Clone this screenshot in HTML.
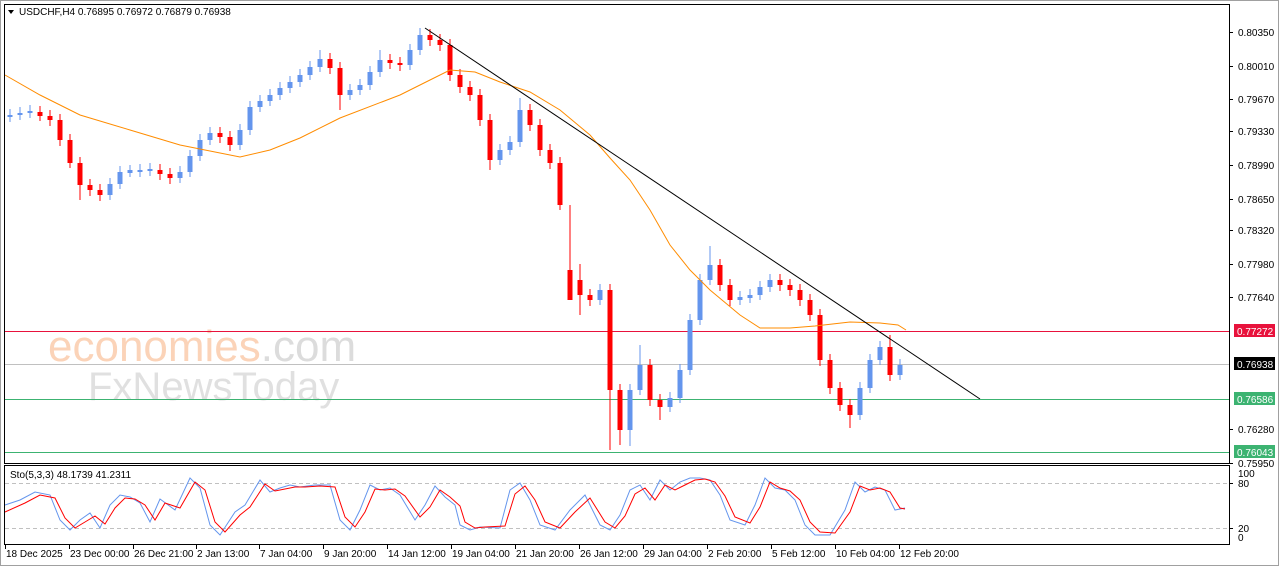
<!DOCTYPE html><html><head><meta charset="utf-8"><style>
body{margin:0;background:#fff;width:1280px;height:567px;overflow:hidden}
svg text{font-family:"Liberation Sans",sans-serif;font-size:10px}
</style></head><body>
<svg width="1280" height="567" xmlns="http://www.w3.org/2000/svg">
<rect x="0.5" y="0.5" width="1278" height="565" fill="#fff" stroke="#a0a0a0"/>
<text x="48" y="361" style="font-size:44px" fill="#fbd3b8">economies<tspan fill="#dcdcdc">.com</tspan></text>
<text x="88" y="400" style="font-size:40px" fill="#e0e0e0">FxNewsToday</text>

<rect x="5" y="331" width="1224" height="1" fill="#e8123c"/>
<rect x="5" y="364" width="1224" height="1" fill="#c0c0c0"/>
<rect x="5" y="399" width="1224" height="1" fill="#3cb371"/>
<rect x="5" y="452" width="1224" height="1" fill="#3cb371"/>
<line x1="5" x2="1229" y1="483.5" y2="483.5" stroke="#c0c0c0" stroke-dasharray="4,3"/>
<line x1="5" x2="1229" y1="528.5" y2="528.5" stroke="#c0c0c0" stroke-dasharray="4,3"/>

<g stroke="#6495ed">
<path stroke-width="1" d="M10 109V122M20 107V120M30 105V118M110 178V200M120 166V189M130 165V177M140 164V177M150 163V176M180 166V183M190 150V177M200 134V161M210 127V145M240 124V150M250 101V135M260 95V112M270 89V106M280 82V100M290 76V93M300 69V87M310 61V80M320 50V72M350 84V100M360 79V95M370 66V90M380 50V77M410 44V70M420 28V55M500 144V165M510 136V155M520 98V147M600 284V305M630 384V446M640 345V395M670 392V412M680 364V403M690 314V375M700 274V325M710 246V285M740 291V305M750 289V303M760 281V300M770 274V292M860 382V420M870 354V393M880 341V365M900 359V380"/>
<path stroke-width="5" d="M10 115V117M20 113V115M30 111V113M110 184V195M120 172V184M130 170V173M140 170V172M150 169V171M180 172V178M190 156V172M200 140V156M210 133V140M240 130V145M250 107V130M260 101V107M270 95V101M280 88V95M290 82V88M300 75V82M310 67V75M320 59V67M350 90V95M360 85V90M370 72V85M380 60V72M410 50V65M420 35V50M500 150V160M510 142V150M520 110V142M600 290V300M630 390V430M640 365V390M670 398V407M680 370V398M690 320V370M700 280V320M710 265V280M740 297V300M750 295V298M760 287V295M770 280V287M860 388V415M870 360V388M880 347V360M900 365V375"/>
</g>
<g stroke="#ff0000">
<path stroke-width="1" d="M40 106V121M50 110V126M60 114V146M70 134V168M80 157V200M90 179V196M100 184V201M160 164V180M170 168V184M220 127V143M230 131V151M330 53V74M340 62V110M390 54V69M400 57V71M430 29V46M440 34V51M450 39V81M460 69V93M470 81V101M480 89V126M490 114V170M530 104V131M540 119V156M550 144V169M560 157V210M570 205V300M580 264V315M590 289V306M610 284V450M620 384V445M650 359V406M660 394V420M720 259V291M730 279V306M780 274V291M790 279V296M800 284V306M810 294V321M820 309V366M830 354V394M840 382V411M850 399V428M890 335V381"/>
<path stroke-width="5" d="M40 112V116M50 116V120M60 120V140M70 140V163M80 163V185M90 185V190M100 190V195M160 170V174M170 174V178M220 133V137M230 137V145M330 59V68M340 68V95M390 60V63M400 63V65M430 35V40M440 40V45M450 45V75M460 75V87M470 87V95M480 95V120M490 120V160M530 110V125M540 125V150M550 150V163M560 163V205M570 270V300M580 280V295M590 295V300M610 290V390M620 390V430M650 365V400M660 400V407M720 265V285M730 285V300M780 280V285M790 285V290M800 290V300M810 300V315M820 315V360M830 360V388M840 388V405M850 405V415M890 347V375"/>
</g>

<polyline fill="none" stroke="#ff8c00" points="5,75 40,95 80,115 130,130 180,145 240,157 270,150 300,138 340,118 400,95 430,80 450,70 475,72 500,82 530,92 560,110 590,135 610,158 630,180 650,210 670,245 690,270 710,290 740,315 760,328 790,328 815,326 850,322 880,323 898,325 906,330"/>
<line x1="425" y1="28" x2="980" y2="399" stroke="#000"/>

<polyline fill="none" stroke="#6495ed" points="5,505 20,500 35,492 50,495 60,520 70,530 80,520 90,513 100,528 110,505 120,495 130,497 140,503 150,522 160,499 175,510 190,478 200,488 210,525 220,535 235,512 245,505 260,480 270,492 280,488 290,485 300,487 315,485 330,485 340,520 350,530 360,510 370,485 380,490 390,488 400,495 415,520 425,505 435,486 445,497 455,505 460,525 470,530 480,527 500,528 510,490 520,483 530,500 540,525 555,530 570,510 585,495 600,525 610,530 620,515 630,490 640,485 650,500 660,480 670,490 680,482 690,478 700,478 710,480 720,495 730,520 745,525 755,505 765,478 775,488 785,490 795,500 805,525 815,535 830,535 845,510 855,482 865,492 875,487 885,490 895,510 905,508"/>
<polyline fill="none" stroke="#ff0000" points="5,512 25,503 40,495 55,498 65,518 75,528 85,522 95,516 105,524 115,508 125,498 135,499 145,505 155,520 165,503 180,508 195,482 205,490 215,522 225,532 240,515 250,507 265,484 275,491 285,489 295,487 305,487 320,486 335,487 345,517 355,527 365,512 375,489 385,490 395,489 405,496 420,517 430,507 440,490 450,497 460,506 465,522 475,528 485,527 505,526 515,494 525,486 535,500 545,522 560,528 575,512 590,498 605,522 615,528 625,516 635,494 645,488 655,500 665,485 675,490 685,485 695,480 705,479 715,482 725,496 735,517 750,523 760,507 770,482 780,488 790,491 800,500 810,522 820,532 835,533 850,512 860,486 870,490 880,488 890,492 900,508 905,509"/>

<rect x="4.5" y="4.5" width="1225" height="459" fill="none" stroke="#000"/>
<rect x="4.5" y="465.5" width="1225" height="79" fill="none" stroke="#000"/>
<polygon points="8,10 14,10 11,14" fill="#000"/>
<text x="19" y="15">USDCHF,H4  0.76895 0.76972 0.76879 0.76938</text>
<text x="10" y="478">Sto(5,3,3) 48.1739 41.2311</text>

<g stroke="#000">
<path d="M1229 32.5h4M1229 66.5h4M1229 99.5h4M1229 131.5h4M1229 165.5h4M1229 199.5h4M1229 230.5h4M1229 264.5h4M1229 297.5h4M1229 429.5h4M1229 463.5h4M1229 483.5h4M1229 528.5h4"/>
<path d="M5.5 545v4M69.5 545v4M133.5 545v4M196.5 545v4M259.5 545v4M323.5 545v4M387.5 545v4M451.5 545v4M515.5 545v4M579.5 545v4M643.5 545v4M707.5 545v4M771.5 545v4M835.5 545v4M899.5 545v4"/>
</g>
<text x="1238" y="36">0.80350</text><text x="1238" y="70">0.80010</text><text x="1238" y="103">0.79670</text><text x="1238" y="135">0.79330</text><text x="1238" y="169">0.78990</text><text x="1238" y="203">0.78650</text><text x="1238" y="234">0.78320</text><text x="1238" y="268">0.77980</text><text x="1238" y="301">0.77640</text><text x="1238" y="433">0.76280</text><text x="1238" y="467">0.75950</text>
<rect x="1234" y="324" width="41" height="13" fill="#e8123c"/><text x="1237" y="335" fill="#fff">0.77272</text>
<rect x="1234" y="357" width="41" height="13" fill="#000"/><text x="1237" y="368" fill="#fff">0.76938</text>
<rect x="1234" y="392" width="41" height="13" fill="#3cb371"/><text x="1237" y="403" fill="#fff">0.76586</text>
<rect x="1234" y="445" width="41" height="13" fill="#3cb371"/><text x="1237" y="456" fill="#fff">0.76043</text>
<text x="1238" y="477">100</text><text x="1238" y="487">80</text><text x="1238" y="532">20</text><text x="1238" y="541">0</text>
<text x="6" y="557">18 Dec 2025</text><text x="70" y="557">23 Dec 00:00</text><text x="134" y="557">26 Dec 21:00</text><text x="197" y="557">2 Jan 13:00</text><text x="260" y="557">7 Jan 04:00</text><text x="324" y="557">9 Jan 20:00</text><text x="388" y="557">14 Jan 12:00</text><text x="452" y="557">19 Jan 04:00</text><text x="516" y="557">21 Jan 20:00</text><text x="580" y="557">26 Jan 12:00</text><text x="644" y="557">29 Jan 04:00</text><text x="708" y="557">2 Feb 20:00</text><text x="772" y="557">5 Feb 12:00</text><text x="836" y="557">10 Feb 04:00</text><text x="900" y="557">12 Feb 20:00</text>
</svg>
</body></html>
